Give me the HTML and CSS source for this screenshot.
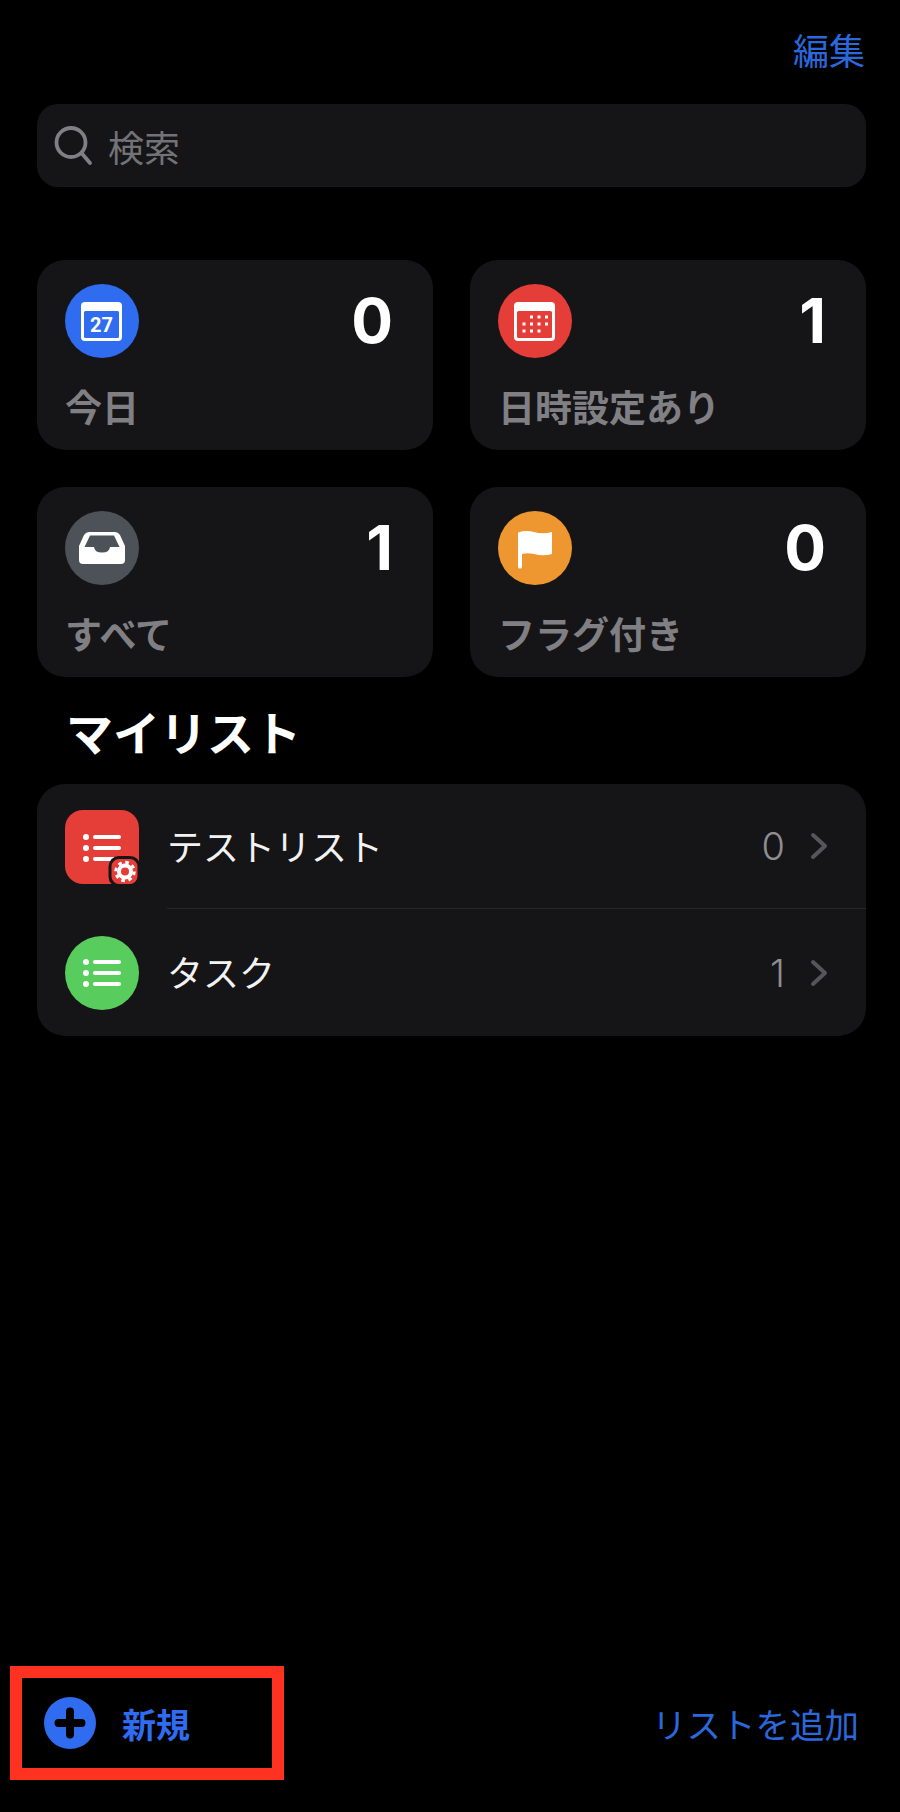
FILE: index.html
```html
<!DOCTYPE html>
<html lang="ja">
<head>
    <meta charset="UTF-8">
    <meta name="viewport" content="width=device-width, initial-scale=1.0">
    <title>リマインダー</title>
    <link rel="stylesheet" href="styles.css">
</head>
<body>

    <div class="pantalla">
        <div class="cabecera"><span class="editar">編集</span></div>

        <div class="buscar">
            <svg class="icono-buscar" viewBox="0 0 40 40" fill="none" stroke="#808084" stroke-width="3.8" stroke-linecap="round">
                <ellipse cx="17" cy="16.5" rx="14.5" ry="14.5"/>
                <path d="M27.5 27 L36 37"/>
            </svg>
            <span>検索</span>
        </div>

        <div class="tarjetas">
            <div class="tarjeta">
                <div class="tarjeta-fila">
                    <svg class="icono" viewBox="0 0 74 74">
                        <circle cx="37" cy="37" r="37" fill="#2f6cf0"/>
                        <rect x="16" y="18" width="41" height="39" rx="4" fill="#fff"/>
                        <rect x="19" y="27" width="35" height="27" rx="1.5" fill="#2f6cf0"/>
                        <text class="dia" x="36.5" y="48" text-anchor="middle">27</text>
                    </svg>
                    <span class="numero">0</span>
                </div>
                <div class="etiqueta">今日</div>
            </div>
            <div class="tarjeta">
                <div class="tarjeta-fila">
                    <svg class="icono" viewBox="0 0 74 74">
                        <circle cx="37" cy="37" r="37" fill="#e53d38"/>
                        <rect x="16" y="18" width="41" height="39" rx="4" fill="#fff"/>
                        <rect x="19" y="27" width="35" height="27" rx="1.5" fill="#e53d38"/>
                        <g fill="#fff">
                            <rect x="32" y="31.5" width="3" height="3"/><rect x="39.5" y="31.5" width="3" height="3"/><rect x="47" y="31.5" width="3" height="3"/>
                            <rect x="24.5" y="38.5" width="3" height="3"/><rect x="32" y="38.5" width="3" height="3"/><rect x="39.5" y="38.5" width="3" height="3"/><rect x="47" y="38.5" width="3" height="3"/>
                            <rect x="24.5" y="45.5" width="3" height="3"/><rect x="32" y="45.5" width="3" height="3"/><rect x="39.5" y="45.5" width="3" height="3"/>
                        </g>
                    </svg>
                    <span class="numero">1</span>
                </div>
                <div class="etiqueta">日時設定あり</div>
            </div>
            <div class="tarjeta">
                <div class="tarjeta-fila">
                    <svg class="icono" viewBox="0 0 74 74">
                        <circle cx="37" cy="37" r="37" fill="#4d5259"/>
                        <path d="M24 21 H50 Q53 21 55 24 L60 35 V49 Q60 53 56 53 H18 Q14 53 14 49 V35 L19 24 Q21 21 24 21 Z" fill="#fff"/>
                        <path d="M25 24.5 H49 L54.5 36 H45 Q44.5 41.5 37 41.5 Q29.5 41.5 29 36 H19.5 Z" fill="#4d5259"/>
                    </svg>
                    <span class="numero">1</span>
                </div>
                <div class="etiqueta">すべて</div>
            </div>
            <div class="tarjeta">
                <div class="tarjeta-fila">
                    <svg class="icono" viewBox="0 0 74 74">
                        <circle cx="37" cy="37" r="37" fill="#ee9731"/>
                        <path d="M20 21.5 Q28 19 36 21 Q45 23.5 54 21 V43 Q45 45.5 36 43 Q29 41.5 24 43 V56 Q24 57.5 22 57.5 Q20 57.5 20 56 Z" fill="#fff"/>
                    </svg>
                    <span class="numero">0</span>
                </div>
                <div class="etiqueta">フラグ付き</div>
            </div>
        </div>

        <div class="titulo">マイリスト</div>

        <div class="lista">
            <div class="fila">
                <svg class="icono icono-badge" viewBox="0 0 74 74">
                    <rect width="74" height="74" rx="18" fill="#e53d38"/>
                    <g fill="#fff">
                        <circle cx="21" cy="27" r="3"/><circle cx="21" cy="38" r="3"/><circle cx="21" cy="49" r="3"/>
                        <rect x="28" y="25" width="28" height="4" rx="2"/><rect x="28" y="36" width="28" height="4" rx="2"/><rect x="28" y="47" width="24" height="4" rx="2"/>
                    </g>
                    <rect x="45" y="47.5" width="29" height="28" rx="9" fill="#e53d38" stroke="#151517" stroke-width="3"/>
                    <circle cx="60" cy="61.5" r="6" fill="none" stroke="#fff" stroke-width="4"/>
                    <circle cx="60" cy="61.5" r="9.2" fill="none" stroke="#fff" stroke-width="3" stroke-dasharray="3.6 3.62"/>
                </svg>
                <div class="fila-cuerpo con-linea">
                    <span class="fila-nombre">テストリスト</span>
                    <span class="fila-cuenta">0</span>
                    <svg class="flecha" viewBox="0 0 18 28" fill="none" stroke="#56565a" stroke-width="4" stroke-linecap="round" stroke-linejoin="round">
                        <path d="M3 3 L15 14 L3 25"/>
                    </svg>
                </div>
            </div>
            <div class="fila">
                <svg class="icono" viewBox="0 0 74 74">
                    <circle cx="37" cy="37" r="37" fill="#58cc5c"/>
                    <g fill="#fff">
                        <circle cx="21" cy="26" r="3"/><circle cx="21" cy="37" r="3"/><circle cx="21" cy="48" r="3"/>
                        <rect x="28" y="24" width="28" height="4" rx="2"/><rect x="28" y="35" width="28" height="4" rx="2"/><rect x="28" y="46" width="28" height="4" rx="2"/>
                    </g>
                </svg>
                <div class="fila-cuerpo">
                    <span class="fila-nombre">タスク</span>
                    <span class="fila-cuenta">1</span>
                    <svg class="flecha" viewBox="0 0 18 28" fill="none" stroke="#56565a" stroke-width="4" stroke-linecap="round" stroke-linejoin="round">
                        <path d="M3 3 L15 14 L3 25"/>
                    </svg>
                </div>
            </div>
        </div>

        <div class="pie">
            <div class="nuevo">
                <svg class="icono-nuevo" viewBox="0 0 52 52">
                    <circle cx="26" cy="26" r="26" fill="#2f6cf0"/>
                    <path d="M14.5 26 H37.5 M26 14.5 V37.5" stroke="#000" stroke-width="8" stroke-linecap="round"/>
                </svg>
                <span>新規</span>
            </div>
            <span class="agregar">リストを追加</span>
        </div>
    </div>

</body>
</html>
```

FILE: styles.css
```css
body { margin: 0; background-color: #000; font-family: "Noto Sans CJK JP", "Noto Sans", sans-serif; }
.pantalla { width: 900px; height: 1812px; box-sizing: border-box; padding: 0 34px 32px 37px; display: flex; flex-direction: column; }

.cabecera { height: 104px; box-sizing: border-box; padding-top: 31px; display: flex; justify-content: flex-end; }
.editar { font-size: 36px; line-height: 36px; color: #2a68dc; margin-right: 1px; }

.buscar { height: 83px; box-sizing: border-box; padding-left: 17px; background-color: #151517; border-radius: 21px; display: flex; align-items: center; gap: 14px; font-size: 36px; line-height: 40px; color: #737377; }
.icono-buscar { width: 40px; height: 40px; flex: none; }

.tarjetas { margin-top: 73px; display: grid; grid-template-columns: 396px 396px; grid-auto-rows: 190px; column-gap: 37px; row-gap: 37px; }
.tarjeta { padding: 24px 40px 0 28px; background-color: #151517; border-radius: 28px; }
.tarjeta-fila { height: 74px; display: flex; justify-content: space-between; align-items: center; }
.icono { width: 74px; height: 74px; flex: none; display: block; }
.icono-badge { overflow: visible; }
.dia { font-family: Roboto, sans-serif; font-size: 20px; font-weight: 700; fill: #fff; }
.numero { font-family: Inter, sans-serif; font-size: 62px; line-height: 74px; font-weight: 700; color: #fff; }
.etiqueta { margin-top: 26px; font-size: 37px; line-height: 44px; font-weight: 700; color: #808084; }

.titulo { height: 107px; box-sizing: border-box; padding-left: 29px; display: flex; align-items: center; font-size: 47px; font-weight: 700; color: #fff; }

.lista { background-color: #151517; border-radius: 28px; overflow: hidden; }
.fila { padding-left: 28px; display: flex; align-items: center; gap: 28px; }
.fila-cuerpo { flex: 1; height: 127px; padding-right: 38px; display: flex; align-items: center; }
.con-linea { height: 124px; border-bottom: 1px solid #272729; }
.fila-nombre { flex: 1; padding-bottom: 3px; font-size: 36px; line-height: 42px; color: #f2f2f2; }
.fila-cuenta { font-family: Inter, sans-serif; font-size: 38px; line-height: 44px; font-weight: 300; color: #8e8e93; margin-right: 25px; }
.flecha { width: 18px; height: 28px; flex: none; }

.pie { margin-top: auto; margin-left: -27px; margin-right: 7px; display: flex; justify-content: space-between; align-items: center; }
.nuevo { width: 274px; height: 114px; box-sizing: border-box; border: 12px solid #ff3120; padding-left: 22px; display: flex; align-items: center; gap: 26px; font-size: 34px; font-weight: 700; color: #2f6cf0; }
.icono-nuevo { width: 52px; height: 52px; flex: none; }
.agregar { font-size: 34.5px; line-height: 40px; color: #2a68dc; }
```
